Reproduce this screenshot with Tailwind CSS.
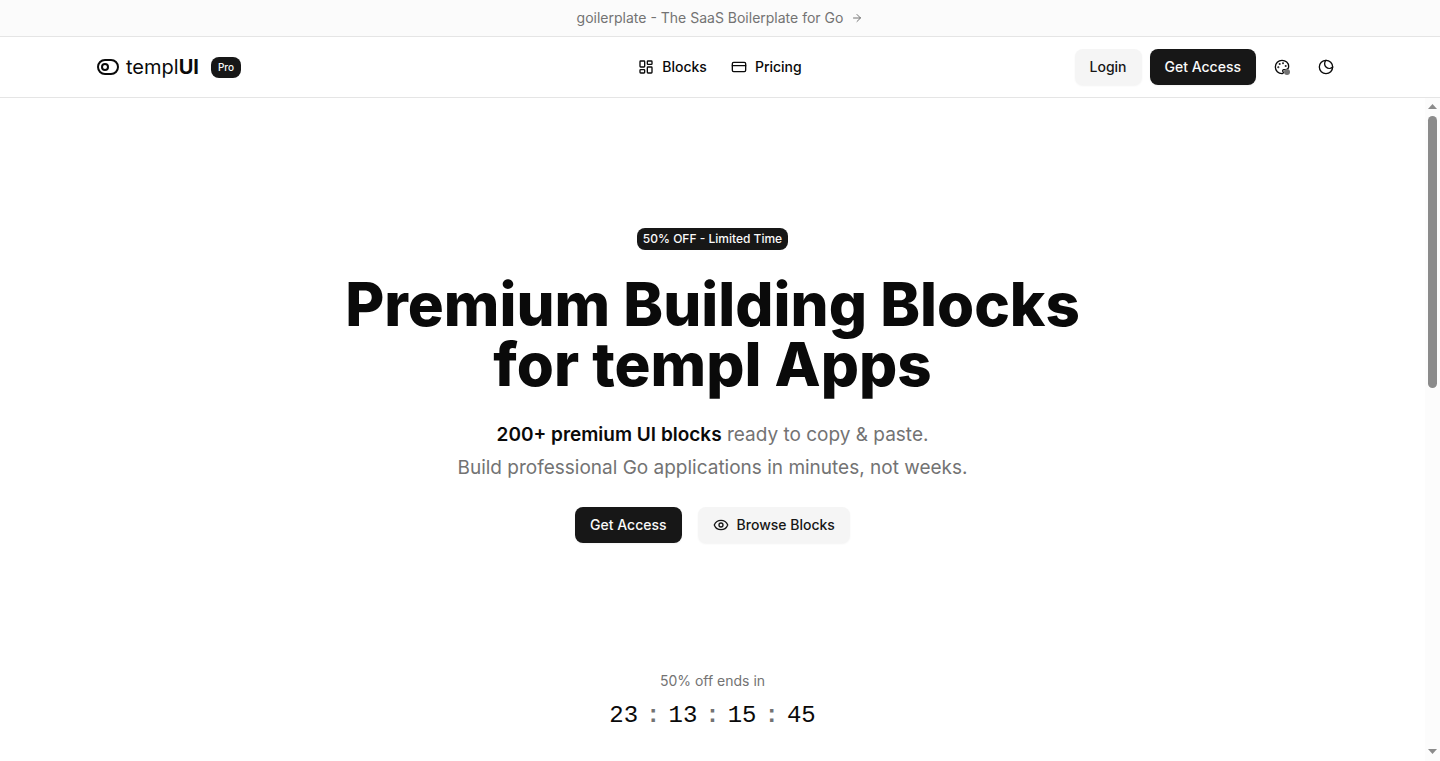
<!DOCTYPE html>
<html lang="en">
  <head>
    <meta charset="UTF-8" />
    <meta name="viewport" content="width=device-width, initial-scale=1.0" />
    <title>templUI Pro - Premium Building Blocks for templ Apps</title>
    <script src="https://cdn.jsdelivr.net/npm/@tailwindcss/browser@4"></script>
  </head>
  <body
    class="flex h-screen flex-col overflow-hidden bg-white font-['Inter',sans-serif] text-neutral-950"
  >
    <!-- Announcement bar -->
    <div class="border-b border-neutral-200 bg-[#fbfbfb]">
      <a
        href="#"
        class="flex h-9 items-center justify-center gap-2 text-sm text-neutral-500"
      >
        <span>goilerplate - The SaaS Boilerplate for Go</span>
        <svg
          class="size-3"
          viewBox="0 0 24 24"
          fill="none"
          stroke="currentColor"
          stroke-width="2"
          stroke-linecap="round"
          stroke-linejoin="round"
        >
          <path d="M5 12h14" />
          <path d="m12 5 7 7-7 7" />
        </svg>
      </a>
    </div>

    <!-- Header -->
    <header class="border-b border-neutral-200">
      <div
        class="mx-auto grid h-15 max-w-7xl grid-cols-[1fr_auto_1fr] items-center px-4"
      >
        <div class="flex items-center gap-3">
          <a href="#" class="flex items-center gap-1.5 text-xl">
            <svg
              class="h-6 w-6"
              viewBox="0 0 24 24"
              fill="none"
              stroke="currentColor"
              stroke-width="2"
            >
              <rect x="2" y="5" width="20" height="14" rx="7" />
              <circle cx="9" cy="12" r="3" />
            </svg>
            <span>templ<b class="font-bold">UI</b></span>
          </a>
          <span
            class="rounded-lg bg-neutral-900 px-[7px] py-1 text-[10px] leading-[13px] font-medium text-neutral-50"
            >Pro</span
          >
        </div>

        <nav class="flex items-center gap-6 text-sm font-medium">
          <a href="#" class="flex items-center gap-2">
            <svg
              class="size-4"
              viewBox="0 0 24 24"
              fill="none"
              stroke="currentColor"
              stroke-width="2"
              stroke-linecap="round"
              stroke-linejoin="round"
            >
              <rect width="7" height="9" x="3" y="3" rx="1" />
              <rect width="7" height="5" x="14" y="3" rx="1" />
              <rect width="7" height="9" x="14" y="12" rx="1" />
              <rect width="7" height="5" x="3" y="16" rx="1" />
            </svg>
            Blocks
          </a>
          <a href="#" class="flex items-center gap-2">
            <svg
              class="size-4"
              viewBox="0 0 24 24"
              fill="none"
              stroke="currentColor"
              stroke-width="2"
              stroke-linecap="round"
              stroke-linejoin="round"
            >
              <rect width="20" height="14" x="2" y="5" rx="2" />
              <path d="M2 10h20" />
            </svg>
            Pricing
          </a>
        </nav>

        <div class="flex items-center justify-end gap-2">
          <a
            href="#"
            class="flex h-9 items-center rounded-lg bg-neutral-100 px-[15px] text-sm font-medium text-neutral-900 shadow-xs"
            >Login</a
          >
          <a
            href="#"
            class="flex h-9 items-center rounded-lg bg-neutral-900 px-[15px] text-sm font-medium text-neutral-50 shadow-xs"
            >Get Access</a
          >
          <button
            type="button"
            aria-label="Change theme color"
            class="flex size-9 items-center justify-center"
          >
            <span class="relative">
              <svg
                class="size-4"
                viewBox="0 0 24 24"
                fill="none"
                stroke="currentColor"
                stroke-width="2"
                stroke-linecap="round"
                stroke-linejoin="round"
              >
                <path
                  d="M12 22a1 1 0 0 1 0-20 10 9 0 0 1 10 9 5 5 0 0 1-5 5h-2.250a1.750 1.750 0 0 0-1.400 2.800l.3.4a1.750 1.750 0 0 1-1.400 2.800z"
                />
                <circle cx="13.5" cy="6.5" r=".5" fill="currentColor" />
                <circle cx="17.5" cy="10.5" r=".5" fill="currentColor" />
                <circle cx="6.5" cy="12.5" r=".5" fill="currentColor" />
                <circle cx="8.5" cy="7.5" r=".5" fill="currentColor" />
              </svg>
              <span
                class="absolute right-0 bottom-0 size-1.5 rounded-full bg-neutral-500"
              ></span>
            </span>
          </button>
          <button
            type="button"
            aria-label="Toggle dark mode"
            class="flex size-9 items-center justify-center"
          >
            <svg
              class="size-4"
              viewBox="0 0 24 24"
              fill="none"
              stroke="currentColor"
              stroke-width="2"
              stroke-linecap="round"
              stroke-linejoin="round"
            >
              <path d="M12 2a7 7 0 1 0 10 10" />
              <circle cx="12" cy="12" r="10" />
            </svg>
          </button>
        </div>
      </div>
    </header>

    <div class="flex min-h-0 flex-1">
      <main class="min-w-0 flex-1 overflow-hidden">
        <!-- Hero -->
        <section class="flex flex-col items-center px-4 pt-[130px] text-center">
          <span
            class="rounded-lg bg-neutral-900 px-1.5 py-[3px] text-xs font-medium text-neutral-50"
            >50% OFF - Limited Time</span
          >
          <h1 class="mt-6 text-[60px] leading-[60px] font-extrabold">
            Premium Building Blocks<br />for templ Apps
          </h1>
          <p class="mt-6 text-[19px] leading-[33px] text-neutral-500">
            <strong class="font-semibold text-neutral-950"
              >200+ premium UI blocks</strong
            >
            ready to copy &amp; paste.<br />
            Build professional Go applications in minutes, not weeks.
          </p>
          <div class="mt-[23px] flex gap-4">
            <a
              href="#"
              class="flex h-9 items-center rounded-lg bg-neutral-900 px-[15px] text-sm font-medium text-neutral-50 shadow-xs"
              >Get Access</a
            >
            <a
              href="#"
              class="flex h-9 items-center gap-2 rounded-lg bg-neutral-100 px-[15px] text-sm font-medium text-neutral-900 shadow-xs"
            >
              <svg
                class="size-4"
                viewBox="0 0 24 24"
                fill="none"
                stroke="currentColor"
                stroke-width="2"
                stroke-linecap="round"
                stroke-linejoin="round"
              >
                <path
                  d="M2.062 12.348a1 1 0 0 1 0-.696 10.750 10.750 0 0 1 19.876 0 1 1 0 0 1 0 .696 10.750 10.750 0 0 1-19.876 0"
                />
                <circle cx="12" cy="12" r="3" />
              </svg>
              Browse Blocks
            </a>
          </div>
        </section>

        <!-- Countdown -->
        <section class="flex flex-col items-center gap-[9px] pt-32">
          <p class="text-sm text-neutral-500">50% off ends in</p>
          <div
            class="flex gap-2 font-['Liberation_Mono',monospace] text-2xl"
          >
            <span>23</span>
            <span class="font-bold text-neutral-500">:</span>
            <span>13</span>
            <span class="font-bold text-neutral-500">:</span>
            <span>15</span>
            <span class="font-bold text-neutral-500">:</span>
            <span>45</span>
          </div>
        </section>
      </main>

      <!-- Scrollbar -->
      <div
        class="flex w-[15px] flex-col items-center bg-[#fcfcfc] pt-1.5 pb-[7px] text-[#8b8b8b]"
        aria-hidden="true"
      >
        <svg class="h-[5px] w-[9px]" viewBox="0 0 9 5" fill="currentColor">
          <path d="M0 5 4.5 0 9 5z" />
        </svg>
        <div class="mt-[7px] h-[272px] w-[9px] rounded-full bg-[#8b8b8b]"></div>
        <svg
          class="mt-auto h-[5px] w-[9px]"
          viewBox="0 0 9 5"
          fill="currentColor"
        >
          <path d="M0 0h9L4.500 5z" />
        </svg>
      </div>
    </div>
  </body>
</html>
